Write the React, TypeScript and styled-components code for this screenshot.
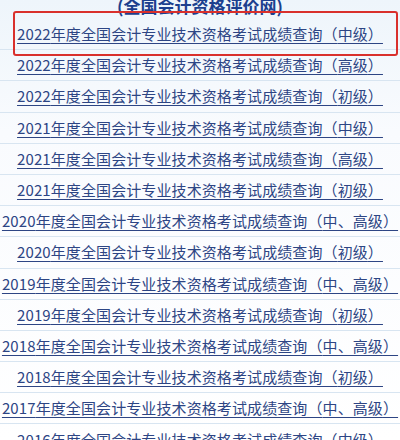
import React from "react";
import styled, { createGlobalStyle } from "styled-components";

interface RowItem {
  year: number
  level: string
}

const ROWS: RowItem[] = [
  { year: 2022, level: "中级" },
  { year: 2022, level: "高级" },
  { year: 2022, level: "初级" },
  { year: 2021, level: "中级" },
  { year: 2021, level: "高级" },
  { year: 2021, level: "初级" },
  { year: 2020, level: "中、高级" },
  { year: 2020, level: "初级" },
  { year: 2019, level: "中、高级" },
  { year: 2019, level: "初级" },
  { year: 2018, level: "中、高级" },
  { year: 2018, level: "初级" },
  { year: 2017, level: "中、高级" },
  { year: 2016, level: "中级" },
];

const GlobalStyle = createGlobalStyle`
  html, body {
    margin: 0;
    padding: 0;
    background: #f8fbfe;
    overflow: hidden;
  }
`;

const App: React.FC = (): React.ReactElement => {
  return (
    <>
      <GlobalStyle />
      <Page>
        <SiteName>(全国会计资格评价网)</SiteName>
        <List>
          {ROWS.map((row, i) => (
            <Row key={i}>
              <ResultLink href="#">
                {row.year}年度全国会计专业技术资格考试成绩查询（{row.level}）
              </ResultLink>
            </Row>
          ))}
          <Highlight />
        </List>
      </Page>
    </>
  );
};

const Page = styled.div`
  width: 400px;
  height: 440px;
  overflow: hidden;
  background: linear-gradient(#eef5fb, #f9fbfe 30%, #ffffff);
  font-family: "Noto Sans CJK SC", "Noto Sans", sans-serif;
`;

const SiteName = styled.div`
  height: 19px;
  line-height: 12px;
  text-align: center;
  font-size: 17px;
  font-weight: 700;
  color: #1c3f8e;
`;

const List = styled.div`
  position: relative;
  display: flex;
  flex-direction: column;
`;

const Row = styled.div`
  display: flex;
  align-items: center;
  justify-content: center;
  height: 31.2px;
  box-sizing: border-box;
  border-bottom: 1px solid #d8e5f1;
  white-space: nowrap;
`;

const ResultLink = styled.a`
  font-size: 15px;
  letter-spacing: 0.1px;
  color: #2d4584;
  text-decoration: underline;
  text-underline-offset: 3px;
  text-decoration-thickness: 1px;
  line-height: 20px;
`;

// red frame drawn over the first entry
const Highlight = styled.div`
  position: absolute;
  left: 13px;
  top: -8px;
  width: 385px;
  height: 45px;
  box-sizing: border-box;
  border: 2px solid #d9302c;
  border-radius: 3px;
  pointer-events: none;
`;

export default App;
